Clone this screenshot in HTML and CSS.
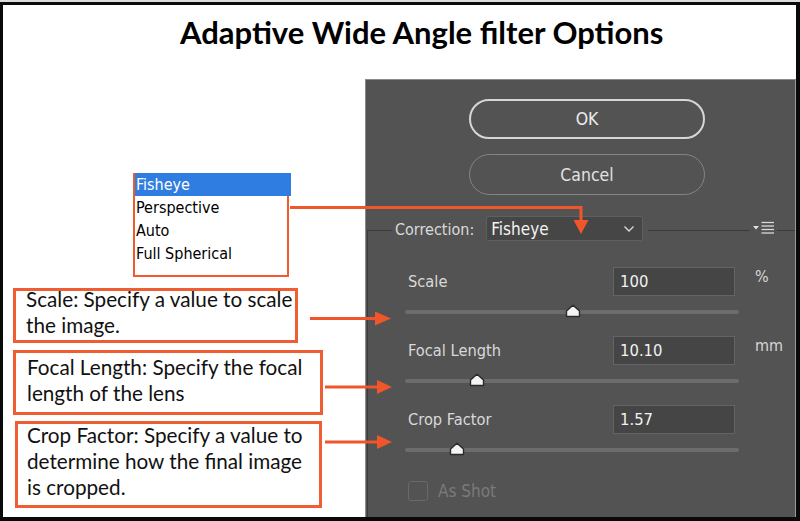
FILE: index.html
```html
<!DOCTYPE html>
<html>
<head>
<meta charset="utf-8">
<link rel="stylesheet" href="styles.css">
</head>
<body>
<div class="frame">
  <h1 class="title">Adaptive Wide Angle filter Options</h1>
  <div class="content">
    <div class="notes">
      <div class="listbox">
        <div class="opt sel">Fisheye</div>
        <div class="opt">Perspective</div>
        <div class="opt">Auto</div>
        <div class="opt">Full Spherical</div>
      </div>
      <div class="note n1"><p>Scale: Specify a value to scale<br>the image.</p></div>
      <div class="note n2"><p>Focal Length: Specify the focal<br>length of the lens</p></div>
      <div class="note n3"><p>Crop Factor: Specify a value to<br>determine how the final image<br>is cropped.</p></div>
    </div>
    <div class="panel">
      <div class="btn ok">OK</div>
      <div class="btn cancel">Cancel</div>
      <div class="corr-head">
        <span class="seg first"></span>
        <span class="corr-label">Correction:</span>
        <div class="dropdown">
          <span>Fisheye</span>
          <svg class="chev" width="12" height="8" viewBox="0 0 12 8"><path d="M1.5 1.5 L6 6 L10.5 1.5" fill="none" stroke="#d8d8d8" stroke-width="1.4"/></svg>
        </div>
        <span class="seg grow"></span>
        <svg class="menu-ico" width="22" height="14" viewBox="0 0 22 14"><polygon points="0,5 6,5 3,8.5" fill="#e0e0e0"/><g stroke="#d8d8d8" stroke-width="1.3"><line x1="8.5" y1="1.5" x2="21" y2="1.5"/><line x1="8.5" y1="5" x2="21" y2="5"/><line x1="8.5" y1="8.5" x2="21" y2="8.5"/><line x1="8.5" y1="12" x2="21" y2="12"/></g></svg>
        <span class="seg tail"></span>
      </div>
      <div class="group">
        <div class="field">
          <div class="row">
            <span class="flabel">Scale</span>
            <div class="input">100</div>
            <span class="unit">%</span>
          </div>
          <div class="slider"><div class="track"></div><svg class="thumb" style="left:160px" width="16" height="14" viewBox="0 0 16 14"><polygon points="1.5,12.5 14.5,12.5 14.5,7 8,1.3 1.5,7" fill="#f4f4f4" stroke="#2a2a2a" stroke-width="1.4" stroke-linejoin="round"/></svg></div>
        </div>
        <div class="field">
          <div class="row">
            <span class="flabel">Focal Length</span>
            <div class="input">10.10</div>
            <span class="unit">mm</span>
          </div>
          <div class="slider"><div class="track"></div><svg class="thumb" style="left:64px" width="16" height="14" viewBox="0 0 16 14"><polygon points="1.5,12.5 14.5,12.5 14.5,7 8,1.3 1.5,7" fill="#f4f4f4" stroke="#2a2a2a" stroke-width="1.4" stroke-linejoin="round"/></svg></div>
        </div>
        <div class="field">
          <div class="row">
            <span class="flabel">Crop Factor</span>
            <div class="input">1.57</div>
            <span class="unit"></span>
          </div>
          <div class="slider"><div class="track"></div><svg class="thumb" style="left:44px" width="16" height="14" viewBox="0 0 16 14"><polygon points="1.5,12.5 14.5,12.5 14.5,7 8,1.3 1.5,7" fill="#f4f4f4" stroke="#2a2a2a" stroke-width="1.4" stroke-linejoin="round"/></svg></div>
        </div>
        <div class="check-row">
          <span class="checkbox"></span>
          <span class="check-label">As Shot</span>
        </div>
      </div>
    </div>
  </div>
  <svg class="arrows" width="800" height="521" viewBox="0 0 800 521">
    <g stroke="#f1552a" stroke-width="3" fill="none">
      <polyline points="290,207.5 581,207.5 581,222"/>
      <line x1="310" y1="318.5" x2="377" y2="318.5"/>
      <line x1="325" y1="387" x2="378" y2="387"/>
      <line x1="325" y1="442" x2="378" y2="442"/>
    </g>
    <g fill="#f1552a">
      <polygon points="573.5,220 588.5,220 581,234"/>
      <polygon points="375,311.5 391,318.5 375,325.5"/>
      <polygon points="377,380 392,387 377,394"/>
      <polygon points="377,435 392,442 377,449"/>
    </g>
  </svg>
</div>
</body>
</html>
```

FILE: styles.css
```css
* { box-sizing: border-box; }
html, body { margin: 0; padding: 0; }
body { background: #dcdcdc; width: 800px; height: 521px; overflow: hidden; }

.frame {
  position: relative;
  margin-top: 2px;
  width: 800px;
  height: 519px;
  background: #ffffff;
  border-style: solid;
  border-color: #0a0a0a;
  border-width: 3px 4px 4px 3px;
  display: flex;
  flex-direction: column;
}

.title {
  margin: 0;
  height: 74px;
  padding-left: 177px;
  font-family: "Lato", "Liberation Sans", sans-serif;
  font-weight: 700;
  font-size: 31px;
  line-height: 55px;
  color: #000;
  white-space: nowrap;
}

.content {
  display: flex;
  flex: 1;
  min-height: 0;
}

.notes {
  width: 362px;
  flex: none;
  display: flex;
  flex-direction: column;
  padding-top: 94px;
}

.listbox {
  margin-left: 130px;
  width: 156px;
  height: 104px;
  border: 2px solid #ef5a2e;
  font-family: "DejaVu Sans Condensed", "DejaVu Sans", sans-serif;
  font-size: 16px;
  color: #000;
}
.opt {
  height: 23px;
  line-height: 23px;
  padding-left: 1px;
  white-space: nowrap;
}
.opt.sel {
  background: #2f7de1;
  color: #ffffff;
  margin-top: -2px;
  width: calc(100% + 4px);
}

.note {
  border: 3px solid #ef5e33;
  font-family: "Lato", "Liberation Sans", sans-serif;
  font-size: 20.7px;
  line-height: 26px;
  color: #111;
  white-space: nowrap;
  overflow: visible;
}
.note p { margin: 0; }
.n1 { margin: 11px 0 0 10px; width: 285px; height: 55px; padding-left: 10px; }
.n1 p { margin-top: -5px; }
.n2 { margin: 7px 0 0 10px; width: 310px; height: 65px; padding-left: 11px; }
.n2 p { margin-top: 1px; }
.n3 { margin: 6px 0 0 12px; width: 307px; height: 87px; padding-left: 9px; }
.n3 p { margin-top: -2px; }

.panel {
  flex: 1;
  background: #535353;
  border-top: 1px solid #8a8a8a;
  border-left: 1px solid #8a8a8a;
  border-right: 1px solid #9a9a9a;
  display: flex;
  flex-direction: column;
  padding-top: 19px;
  font-family: "DejaVu Sans Condensed", "DejaVu Sans", sans-serif;
}

.btn {
  margin-left: 103px;
  width: 236px;
  border-radius: 21px;
  display: flex;
  align-items: center;
  justify-content: center;
  font-size: 17.5px;
}
.btn.ok {
  height: 40px;
  border: 2px solid #d6d6d6;
  color: #ececec;
}
.btn.cancel {
  margin-top: 15px;
  height: 41px;
  border: 1.5px solid #858585;
  color: #e2e2e2;
}

.corr-head {
  margin-top: 21px;
  height: 25px;
  display: flex;
  align-items: center;
}
.seg { display: block; height: 1px; background: #3b3b3b; align-self: flex-end; margin-bottom: 10px; }
.seg.first {
  margin-left: 1px;
  width: 25px;
  height: 11px;
  margin-bottom: 0;
  background: none;
  border-top: 1px solid #3b3b3b;
  border-left: 1px solid #3b3b3b;
}
.corr-label {
  margin-left: 3px;
  font-size: 16px;
  color: #dadada;
  margin-top: 2px;
}
.dropdown {
  margin-left: 12px;
  width: 157px;
  height: 25px;
  background: #464646;
  border: 1px solid #5f5f5f;
  border-radius: 2px;
  display: flex;
  align-items: center;
  justify-content: space-between;
  padding: 0 7px 0 4px;
  font-size: 17px;
  color: #f2f2f2;
}
.seg.grow { flex: 1; margin-left: 5px; margin-right: 3px; }
.menu-ico { flex: none; margin-bottom: 1px; }
.seg.tail { width: 18px; margin-left: 2px; }

.group {
  flex: 1;
  margin-left: 1px;
  border-left: 1px solid #3b3b3b;
  padding-top: 26px;
  display: flex;
  flex-direction: column;
}
.field { display: flex; flex-direction: column; }
.row {
  display: grid;
  grid-template-columns: 185px 122px 39px;
  column-gap: 20px;
  padding-left: 40px;
  align-items: center;
  height: 29px;
}
.flabel { font-size: 16.3px; color: #d9d9d9; }
.input {
  height: 29px;
  background: #454545;
  border: 1px solid #646464;
  font-size: 16.5px;
  color: #f1f1f1;
  padding-left: 6px;
  line-height: 27px;
}
.unit { align-self: start; font-size: 16px; color: #d6d6d6; line-height: 18px; margin-top: 1px; }

.slider {
  position: relative;
  margin-left: 37px;
  width: 334px;
  height: 40px;
}
.track {
  position: absolute;
  left: 0; right: 0;
  top: 14px;
  height: 4px;
  border-radius: 2px;
  background: #6c6c6c;
}
.thumb { position: absolute; top: 8px; }

.check-row {
  margin-top: 7px;
  padding-left: 40px;
  display: flex;
  align-items: center;
}
.checkbox {
  width: 20px;
  height: 20px;
  border: 1.5px solid #696969;
  border-radius: 3px;
}
.check-label {
  margin-left: 10px;
  font-size: 17px;
  color: #7a7a7a;
}

.arrows {
  position: absolute;
  top: -5px;
  left: -3px;
  pointer-events: none;
}
```
